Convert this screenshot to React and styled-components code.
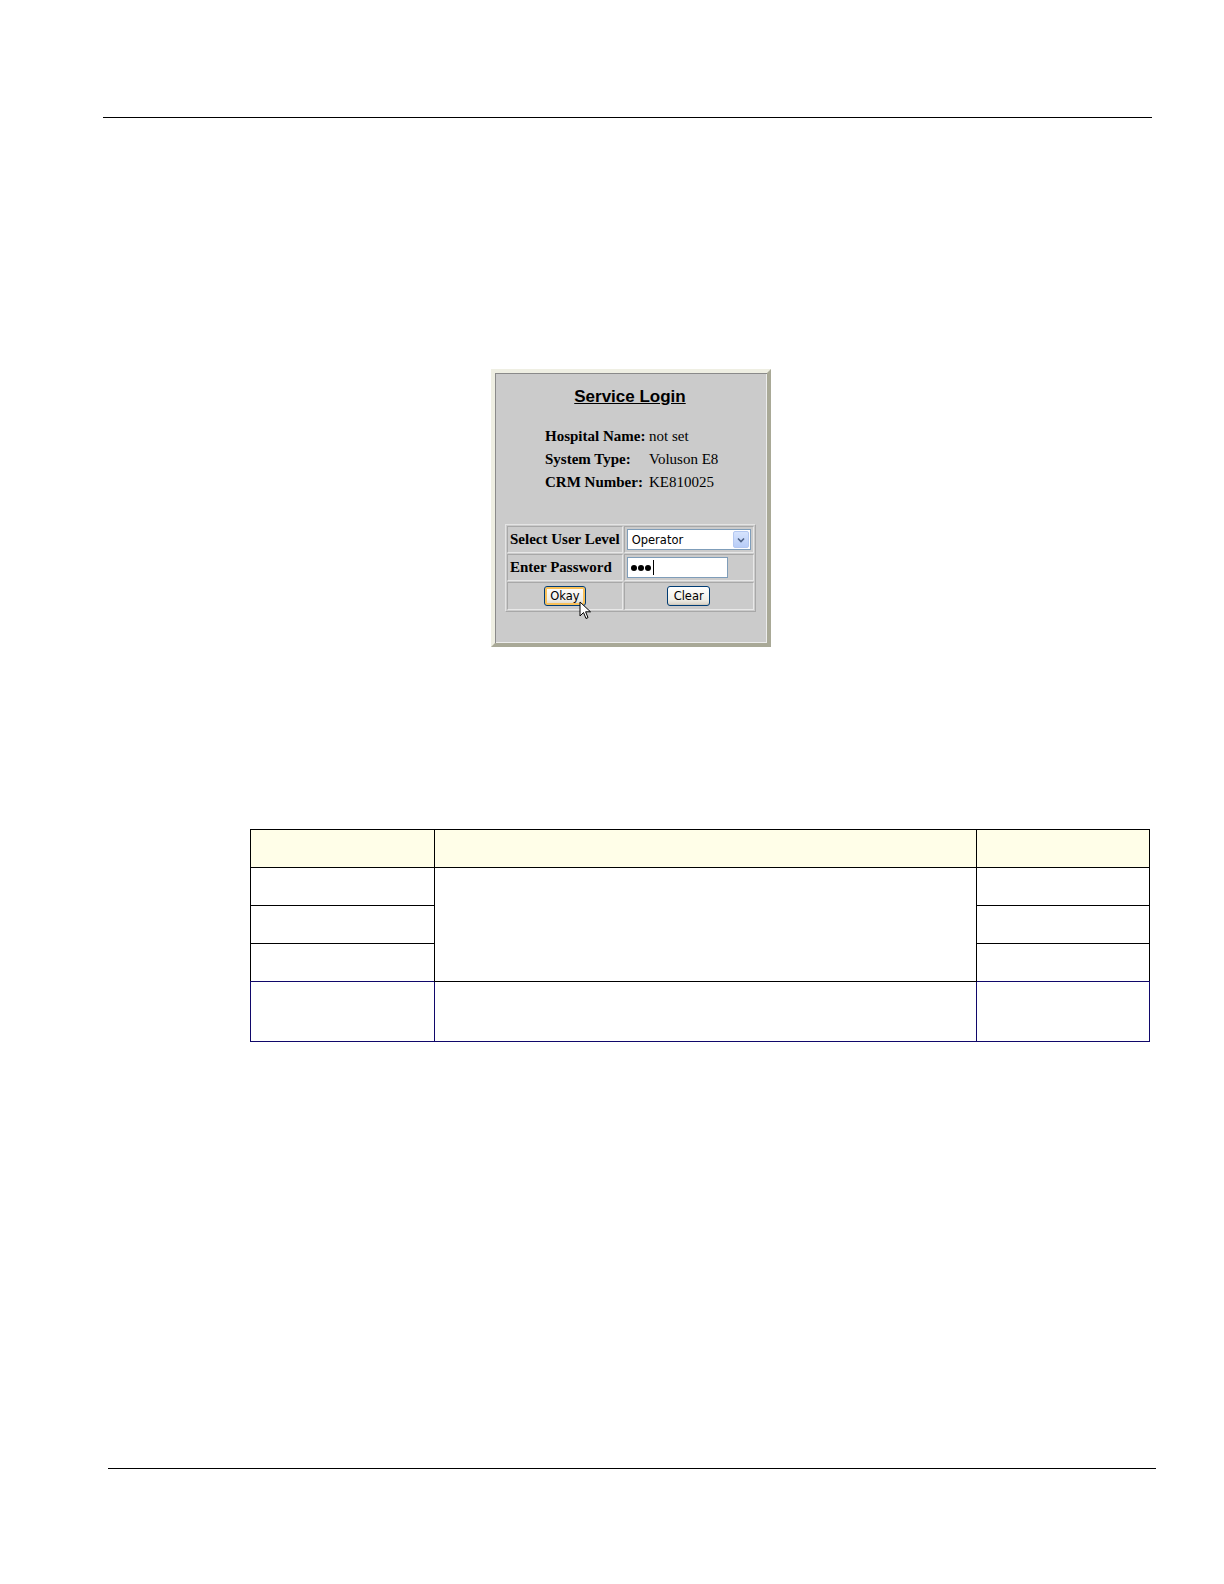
import React from 'react';
import styled, { createGlobalStyle } from 'styled-components';

const Global = createGlobalStyle`
  html, body { margin: 0; padding: 0; background: #fff; }
  body { font-family: "Liberation Sans", Arial, sans-serif; }
`;

const Page = styled.div`
  position: relative;
  padding-top: 117px;
  padding-bottom: 40px;
  box-sizing: border-box;
  overflow: hidden;
`;

const Rule = styled.div`
  height: 1px;
  background: #000;
  margin-left: ${p => p.left}px;
  width: ${p => p.width}px;
  margin-top: ${p => p.top || 0}px;
`;

const Dialog = styled.div`
  margin-top: 251px;
  margin-left: 491px;
  width: 280px;
  height: 278px;
  box-sizing: border-box;
  background: #cbcbcb;
  border: 4px solid;
  border-color: #efefe3 #a9a997 #a9a997 #efefe3;
  box-shadow: inset 1px 1px 0 #8a8a8a, inset -1px -1px 0 #ececec;
  padding: 14px 0 0 0;
`;

const Title = styled.div`
  text-align: center;
  font-family: "Liberation Sans", Arial, sans-serif;
  font-weight: bold;
  font-size: 17px;
  line-height: 20px;
  text-decoration: underline;
  color: #000;
  margin-left: -2px;
`;

const Info = styled.div`
  display: grid;
  grid-template-columns: 104px auto;
  margin: 18px 0 0 50px;
  font-family: "Liberation Serif", "Times New Roman", serif;
  font-size: 15px;
  line-height: 23px;
  color: #000;
`;

const Label = styled.div`
  font-weight: bold;
  white-space: nowrap;
`;

const Value = styled.div`
  white-space: nowrap;
`;

const FormTable = styled.table`
  margin: 30px 0 0 10px;
  width: 249px;
  border-collapse: separate;
  border-spacing: 1px;
  border: 1px solid;
  border-color: #e4e4e4 #a8a8a8 #a8a8a8 #e4e4e4;
`;

const Cell = styled.td`
  border: 1px solid;
  border-color: #a8a8a8 #e8e8e8 #e8e8e8 #a8a8a8;
  padding: 1px 2px;
  height: ${p => p.h}px;
  text-align: ${p => (p.center ? 'center' : 'left')};
  font-family: "Liberation Serif", "Times New Roman", serif;
  font-weight: bold;
  font-size: 15px;
  white-space: nowrap;
  width: ${p => p.w || 'auto'};
  position: relative;
`;

const Select = styled.div`
  display: flex;
  align-items: center;
  justify-content: space-between;
  width: 124px;
  height: 21px;
  box-sizing: border-box;
  background: #fff;
  border: 1px solid #7f9db9;
  padding: 0 1px 0 4px;
  font-family: "DejaVu Sans", Tahoma, sans-serif;
  font-weight: normal;
  font-size: 11.5px;
  color: #000;
`;

const Arrow = styled.div`
  width: 16px;
  height: 17px;
  border-radius: 2px;
  background: linear-gradient(#d6e3fd, #b8cdf7);
  border: 1px solid #b4c8f1;
  box-sizing: border-box;
  display: flex;
  align-items: center;
  justify-content: center;
`;

const Input = styled.div`
  display: flex;
  align-items: center;
  width: 101px;
  height: 21px;
  box-sizing: border-box;
  background: #fff;
  border: 1px solid #7f9db9;
  padding-left: 3px;
  gap: 1px;
`;

const Dot = styled.span`
  width: 6px;
  height: 6px;
  border-radius: 50%;
  background: #000;
`;

const Caret = styled.span`
  width: 1px;
  height: 15px;
  background: #000;
  margin-left: 1px;
`;

const Button = styled.button`
  height: 20px;
  width: ${p => p.w}px;
  padding: 0;
  border: 1px solid #003c74;
  border-radius: 3px;
  background: linear-gradient(#ffffff, #f0efe8 70%, #d6d0c5);
  box-shadow: ${p => (p.hover ? 'inset 0 0 0 2px #f9c15a' : 'inset 0 -1px 0 #d0cabd')};
  font-family: "DejaVu Sans", Tahoma, sans-serif;
  font-size: 11.5px;
  color: #000;
  vertical-align: middle;
`;

const Pointer = styled.svg`
  position: absolute;
  left: 71px;
  top: 18px;
`;

const DataTable = styled.table`
  margin-top: 182px;
  margin-left: 250px;
  width: 900px;
  border-collapse: collapse;
`;

const Td = styled.td`
  border: 1.5px solid ${p => p.navy ? '#10086a' : '#000'};
  height: ${p => p.h}px;
  width: ${p => p.w || 'auto'};
  background: ${p => (p.head ? '#fffee8' : '#fff')};
  padding: 0;
`;

const Row = styled.tr`
  & > td { border-bottom-color: ${p => p.navy ? '#10086a' : '#000'}; }
`;

export default function App() {
  return (
    <Page>
      <Global />
      <Rule left={103} width={1049} />
      <Dialog>
        <Title>Service Login</Title>
        <Info>
          <Label>Hospital Name:</Label>
          <Value>not set</Value>
          <Label>System Type:</Label>
          <Value>Voluson E8</Value>
          <Label>CRM Number:</Label>
          <Value>KE810025</Value>
        </Info>
        <FormTable>
          <tbody>
            <tr>
              <Cell h={23} w="114px">Select User Level</Cell>
              <Cell h={23}>
                <Select>
                  <span>Operator</span>
                  <Arrow>
                    <svg width="8" height="6" viewBox="0 0 8 6">
                      <path d="M1 1.5 L4 4.5 L7 1.5" fill="none" stroke="#4d6185" strokeWidth="1.6" />
                    </svg>
                  </Arrow>
                </Select>
              </Cell>
            </tr>
            <tr>
              <Cell h={23}>Enter Password</Cell>
              <Cell h={23}>
                <Input>
                  <Dot /><Dot /><Dot /><Caret />
                </Input>
              </Cell>
            </tr>
            <tr>
              <Cell h={24} center>
                <Button w={42} hover>Okay</Button>
                <Pointer width="13" height="20" viewBox="0 0 13 20">
                  <path d="M1 1 L1 15 L4.5 11.5 L7 17.5 L9 16.6 L6.6 10.8 L11.5 10.8 Z" fill="#fff" stroke="#000" strokeWidth="1" strokeLinejoin="miter" />
                </Pointer>
              </Cell>
              <Cell h={24} center>
                <Button w={43}>Clear</Button>
              </Cell>
            </tr>
          </tbody>
        </FormTable>
      </Dialog>
      <DataTable>
        <tbody>
          <Row>
            <Td head h={37} w="183px" />
            <Td head h={37} w="541px" />
            <Td head h={37} />
          </Row>
          <Row>
            <Td h={37} />
            <Td rowSpan={3} />
            <Td h={37} />
          </Row>
          <Row>
            <Td h={37} />
            <Td h={37} />
          </Row>
          <Row navy>
            <Td h={37} />
            <Td h={37} />
          </Row>
          <tr>
            <Td navy h={59} />
            <Td navy h={59} />
            <Td navy h={59} />
          </tr>
        </tbody>
      </DataTable>
      <Rule left={108} width={1048} top={426} />
    </Page>
  );
}
